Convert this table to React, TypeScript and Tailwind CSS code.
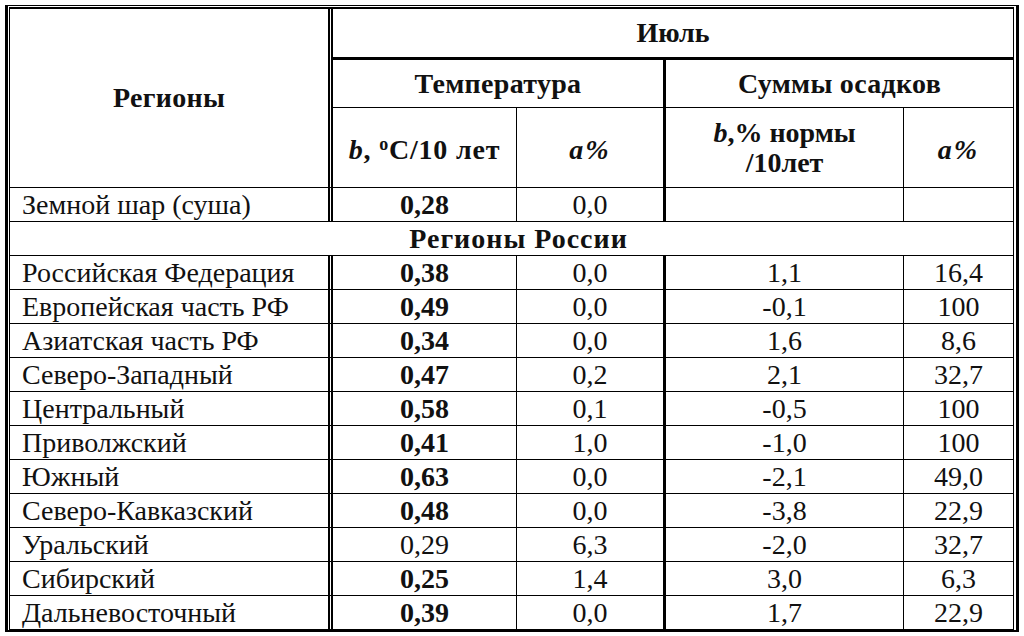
import React from "react";

type Row = {
  name: string;
  b: string;
  bBold: boolean;
  a: string;
  pb: string;
  pa: string;
};

const rows: Row[] = [
  { name: "Российская Федерация", b: "0,38", bBold: true, a: "0,0", pb: "1,1", pa: "16,4" },
  { name: "Европейская часть РФ", b: "0,49", bBold: true, a: "0,0", pb: "-0,1", pa: "100" },
  { name: "Азиатская часть РФ", b: "0,34", bBold: true, a: "0,0", pb: "1,6", pa: "8,6" },
  { name: "Северо-Западный", b: "0,47", bBold: true, a: "0,2", pb: "2,1", pa: "32,7" },
  { name: "Центральный", b: "0,58", bBold: true, a: "0,1", pb: "-0,5", pa: "100" },
  { name: "Приволжский", b: "0,41", bBold: true, a: "1,0", pb: "-1,0", pa: "100" },
  { name: "Южный", b: "0,63", bBold: true, a: "0,0", pb: "-2,1", pa: "49,0" },
  { name: "Северо-Кавказский", b: "0,48", bBold: true, a: "0,0", pb: "-3,8", pa: "22,9" },
  { name: "Уральский", b: "0,29", bBold: false, a: "6,3", pb: "-2,0", pa: "32,7" },
  { name: "Сибирский", b: "0,25", bBold: true, a: "1,4", pb: "3,0", pa: "6,3" },
  { name: "Дальневосточный", b: "0,39", bBold: true, a: "0,0", pb: "1,7", pa: "22,9" },
];

// shared borders
const nameCell = "flex items-center pl-[12px] border-r-[5px] border-double border-black";
const numCell = "flex items-center justify-center";

const BodyRow = ({ row, last }: { row: Row; last: boolean }) => {
  const bottom = last ? "" : "border-b border-black";
  return (
    <>
      <div className={`${nameCell} ${bottom}`}>{row.name}</div>
      <div className={`${numCell} ${bottom} border-r border-black ${row.bBold ? "font-bold" : ""}`}>
        {row.b}
      </div>
      <div className={`${numCell} ${bottom} border-r-[3px] border-black`}>{row.a}</div>
      <div className={`${numCell} ${bottom} border-r border-black`}>{row.pb}</div>
      <div className={`${numCell} ${bottom}`}>{row.pa}</div>
    </>
  );
};

export default function App() {
  return (
    <div className="w-[1024px] h-[636px] bg-white pt-[5px] pl-[5px] overflow-hidden font-['Liberation_Serif','Times_New_Roman',serif]">
      <div className="w-[1014px] border-l-[3px] border-r-[3px] border-t border-b-2 border-black pt-[1px] pl-[1px] pr-[2px]">
        <div className="grid grid-cols-[323px_184px_149px_238px_109px] grid-rows-[51px_48px_80px_repeat(12,34px)_33px] border-l border-r border-t-2 border-b border-black text-[28px] leading-none text-[#111]">
          {/* header */}
          <div className="row-span-3 flex items-center justify-center font-bold border-r-[5px] border-double border-black border-b tracking-[0.3px]">
            Регионы
          </div>
          <div className="col-span-4 flex items-center justify-center font-bold border-b-[3px] border-black">
            Июль
          </div>
          <div className="col-span-2 flex items-center justify-center font-bold border-r-[3px] border-b border-black tracking-[0.3px]">
            Температура
          </div>
          <div className="col-span-2 flex items-center justify-center font-bold border-b border-black tracking-[0.3px]">
            Суммы осадков
          </div>
          <div className="flex items-center justify-center font-bold border-r border-b border-black pt-[4px] tracking-[0.8px]">
            <span>
              <i>b</i>,{" "}
              <span className="relative -top-[9px] text-[18px]">o</span>C/10 лет
            </span>
          </div>
          <div className="flex items-center justify-center font-bold italic border-r-[3px] border-b border-black pt-[4px] tracking-[2px]">
            a%
          </div>
          <div className="flex flex-col items-center justify-center font-bold border-r border-b border-black leading-[30px]">
            <span>
              <i>b</i>,% нормы
            </span>
            <span>/10лет</span>
          </div>
          <div className="flex items-center justify-center font-bold italic border-b border-black pt-[4px] tracking-[2px]">
            a%
          </div>

          {/* world */}
          <div className={`${nameCell} border-b border-black`}>Земной шар (суша)</div>
          <div className={`${numCell} border-r border-b border-black font-bold`}>0,28</div>
          <div className={`${numCell} border-r-[3px] border-b border-black`}>0,0</div>
          <div className={`${numCell} border-r border-b border-black`}></div>
          <div className={`${numCell} border-b border-black`}></div>

          {/* section */}
          <div className="col-span-5 flex items-center justify-center font-bold border-b border-black pl-[14px] tracking-[1px]">
            Регионы России
          </div>

          {rows.map((r, i) => (
            <BodyRow key={r.name} row={r} last={i === rows.length - 1} />
          ))}
        </div>
      </div>
    </div>
  );
}
